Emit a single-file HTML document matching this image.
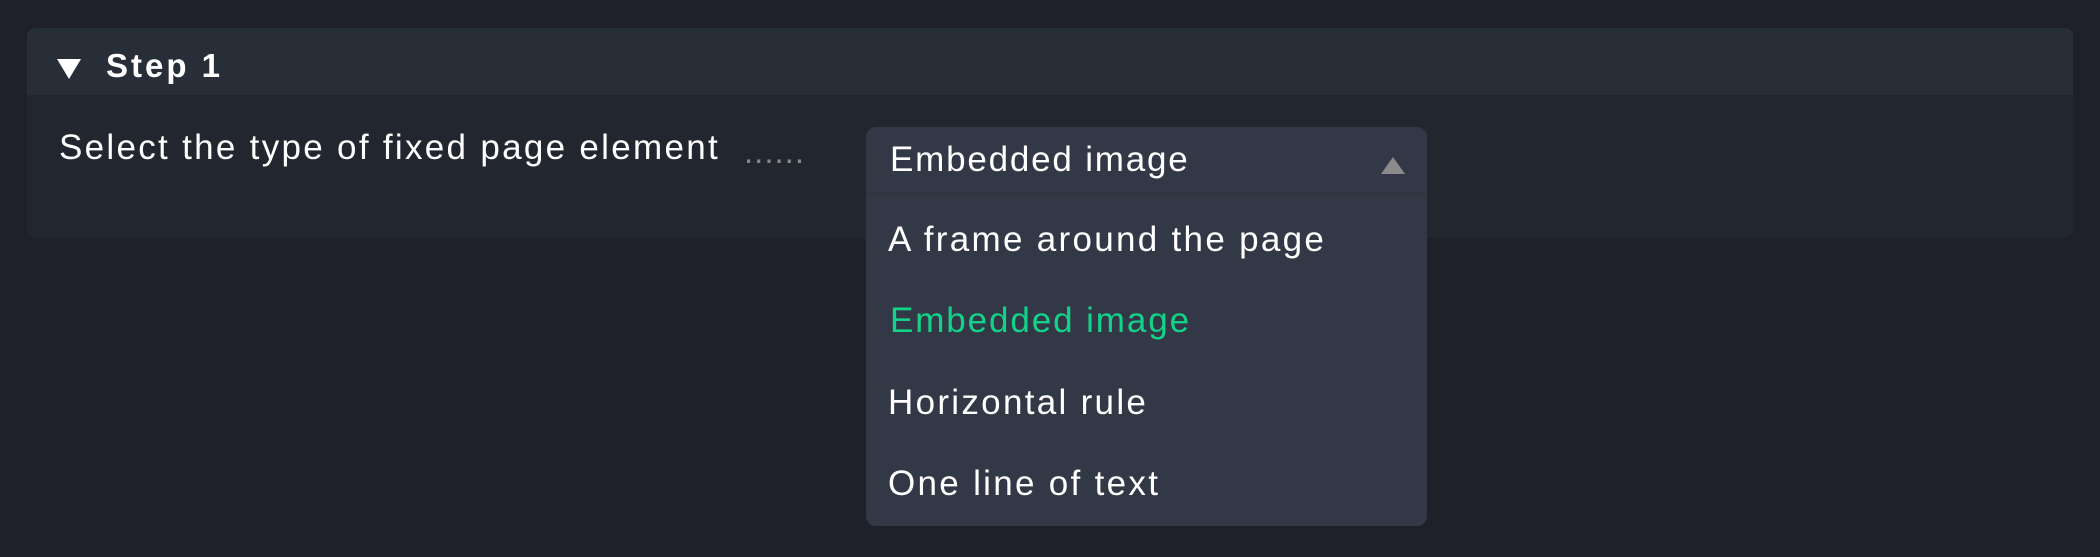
<!DOCTYPE html>
<html><head><meta charset="utf-8"><style>
html,body{margin:0;padding:0;}
body{width:2100px;height:557px;background:#1e2129;position:relative;overflow:hidden;font-family:"Liberation Sans","DejaVu Sans",sans-serif;color:#fff;}
.panel{position:absolute;left:27px;top:28px;width:2046px;height:210px;background:#22262e;border-radius:8px;overflow:hidden;}
.hdr{position:absolute;left:0;top:0;width:100%;height:67px;background:#272e38;}
.tri{position:absolute;left:30px;top:31px;width:0;height:0;border-left:12px solid transparent;border-right:12px solid transparent;border-top:20px solid #fff;}
.step{position:absolute;left:79px;top:19px;font-size:33px;font-weight:bold;letter-spacing:3px;}
.lbl{position:absolute;left:59px;top:128px;font-size:35px;letter-spacing:2.3px;}
.dots{position:absolute;left:744px;top:133px;font-size:33px;color:#888;letter-spacing:1px;}
.dd{position:absolute;left:866px;top:127px;width:561px;height:399px;background:#323846;border-radius:10px;}
.dd .top{position:absolute;left:0;top:0;width:100%;height:65px;border-bottom:3px solid #2f3641;}
.dd .cur{position:absolute;left:24px;top:13px;font-size:35px;letter-spacing:1.8px;}
.arr{position:absolute;left:515px;top:30px;width:0;height:0;border-left:12px solid transparent;border-right:12px solid transparent;border-bottom:17px solid #8a8a8a;}
.it{position:absolute;left:22px;font-size:35px;letter-spacing:2.3px;}
</style></head><body>
<div class="panel">
<div class="hdr"><div class="tri"></div><div class="step">Step 1</div></div>
</div>
<div class="lbl">Select the type of fixed page element</div>
<div class="dots">......</div>
<div class="dd">
<div class="top"><div class="cur">Embedded image</div><div class="arr"></div></div>
<div class="it" style="top:93px">A frame around the page</div>
<div class="it" style="top:174px;color:#13d389;left:24px;letter-spacing:1.9px">Embedded image</div>
<div class="it" style="top:256px">Horizontal rule</div>
<div class="it" style="top:337px">One line of text</div>
</div>
</body></html>
